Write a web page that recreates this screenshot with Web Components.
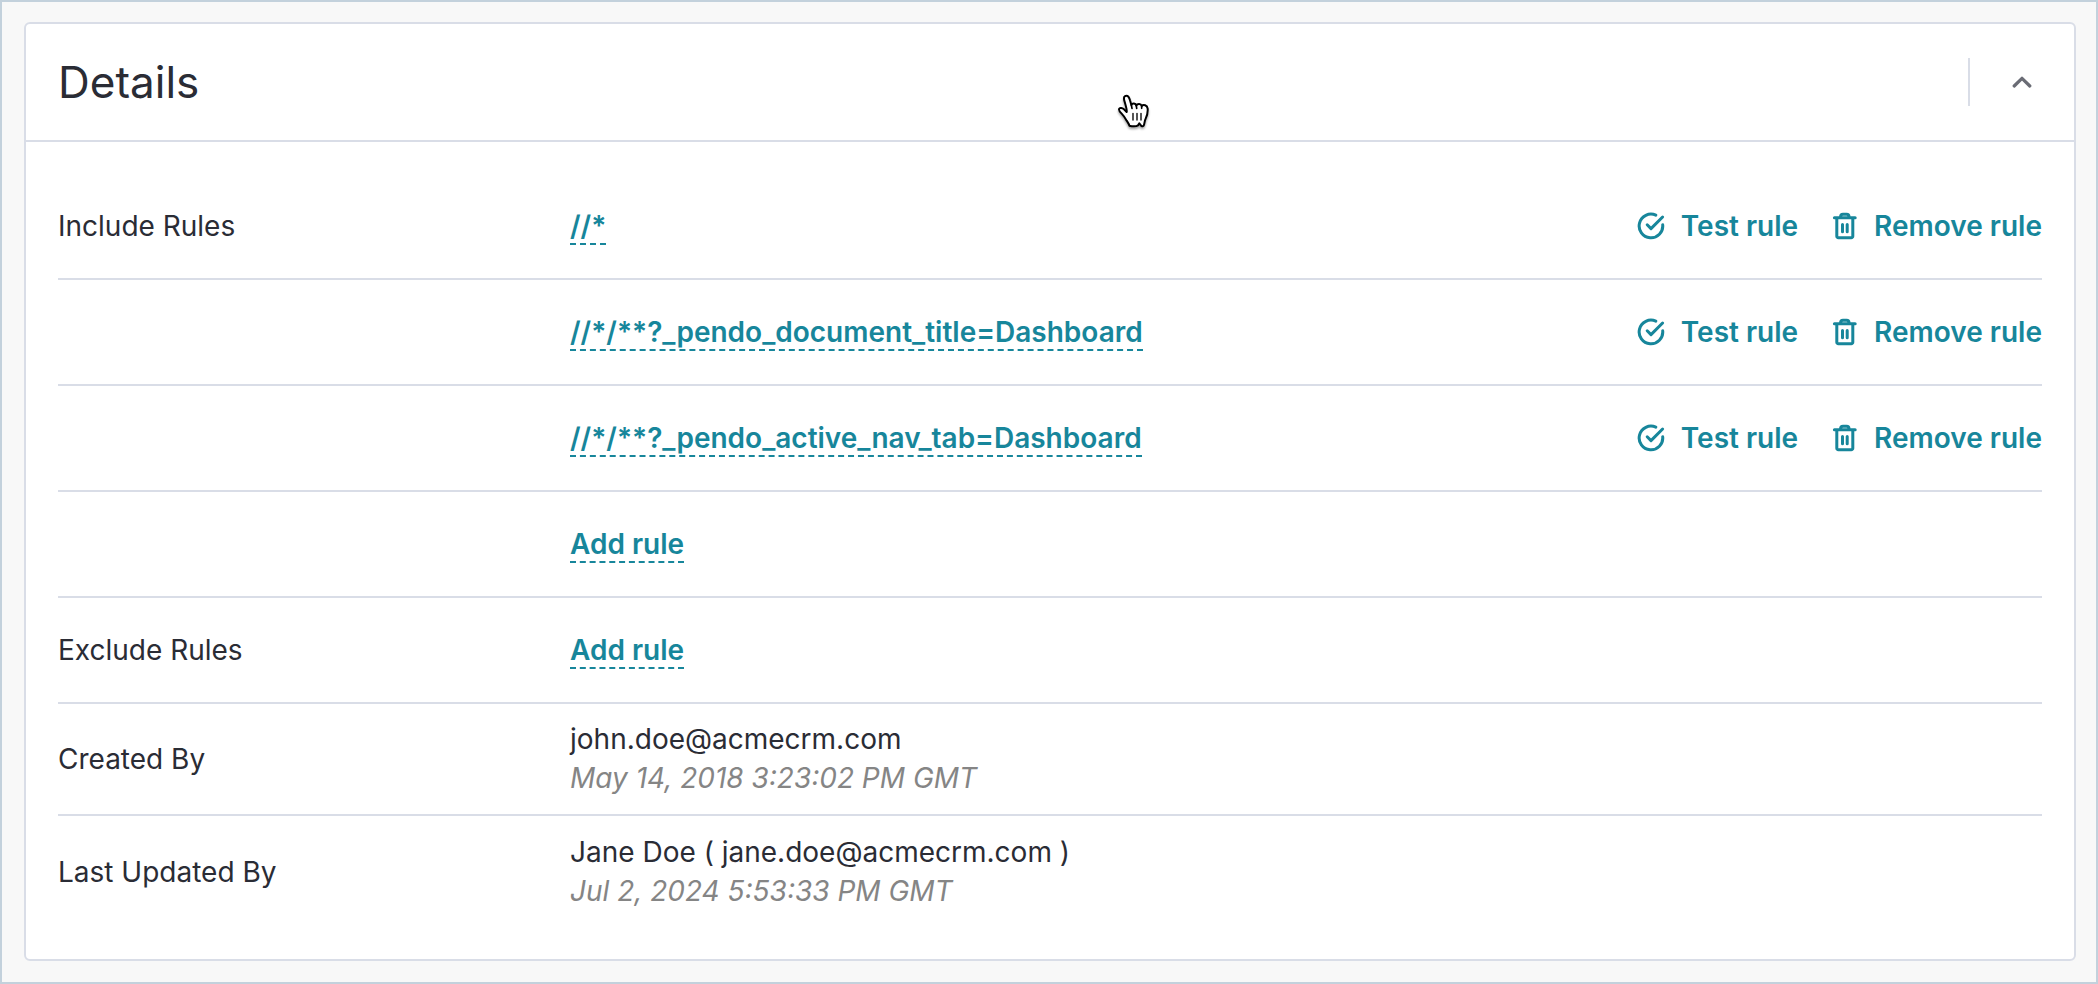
<!DOCTYPE html>
<html lang="en">
<head>
<meta charset="utf-8">
<title>Details</title>
<style>
  *, *::before, *::after { box-sizing: border-box; }
  html, body { margin: 0; }
  body {
    min-height: 100vh;
    display: flex;
    flex-direction: column;
    border: 2px solid #c3d1dc;
    background: #f8f8f8;
    padding: 20px 20px 21px 22px;
    color: #2a2c35;
    font: 400 28px/34px Inter, "Liberation Sans", sans-serif;
  }
  details-card { flex: 1; }
  pointer-cursor { position: absolute; left: 1100px; top: 81px; }
</style>
</head>
<body>
<details-card heading="Details">
  <detail-row label="Include Rules">
    <rule-link>//*</rule-link>
    <rule-actions slot="actions"></rule-actions>
  </detail-row>
  <detail-row>
    <rule-link>//*/**?_pendo_document_title=Dashboard</rule-link>
    <rule-actions slot="actions"></rule-actions>
  </detail-row>
  <detail-row>
    <rule-link>//*/**?_pendo_active_nav_tab=Dashboard</rule-link>
    <rule-actions slot="actions"></rule-actions>
  </detail-row>
  <detail-row><add-rule>Add rule</add-rule></detail-row>
  <detail-row label="Exclude Rules"><add-rule>Add rule</add-rule></detail-row>
  <detail-row label="Created By" tall>
    <author-stamp when="May 14, 2018 3:23:02 PM GMT">john.doe@acmecrm.com</author-stamp>
  </detail-row>
  <detail-row label="Last Updated By" tall last>
    <author-stamp when="Jul 2, 2024 5:53:33 PM GMT">Jane Doe ( jane.doe@acmecrm.com )</author-stamp>
  </detail-row>
</details-card>
<pointer-cursor></pointer-cursor>

<script>
const base = `*{box-sizing:border-box} button{font:inherit;color:inherit;background:none;border:0;padding:0;margin:0;cursor:pointer}`;

function define(name, render) {
  customElements.define(name, class extends HTMLElement {
    constructor() {
      super();
      this.attachShadow({ mode: 'open' });
    }
    connectedCallback() {
      this.shadowRoot.innerHTML = render(this);
    }
  });
}

define('details-card', el => `
  <style>${base}
    :host { display: flex; flex-direction: column; background: #fff; border: 2px solid #d9dde7; border-radius: 6px; }
    header { display: flex; align-items: center; height: 118px; padding: 0 32px; border-bottom: 2px solid #d9dde7; }
    h2 { flex: 1; margin: 0; font-size: 44px; line-height: 54px; font-weight: 400; }
    .toggle { display: flex; align-items: center; gap: 32px; }
    .divider { width: 2px; height: 48px; background: #d9dde7; }
    button { display: grid; place-items: center; width: 40px; height: 40px; color: #6a6c75; }
    .body { padding: 32px 32px 0; }
  </style>
  <header>
    <h2>${el.getAttribute('heading')}</h2>
    <div class="toggle">
      <span class="divider"></span>
      <button type="button" aria-label="Collapse" aria-expanded="true">
        <svg width="20" height="12" viewBox="0 0 20 12" fill="none" stroke="currentColor" stroke-width="3.2" stroke-linecap="round" stroke-linejoin="round"><path d="M2.2 10 10 2.3 17.8 10"/></svg>
      </button>
    </div>
  </header>
  <div class="body"><slot></slot></div>`);

define('detail-row', el => `
  <style>${base}
    :host { display: grid; grid-template-columns: 512px 1fr auto; align-items: center; min-height: 106px; border-bottom: 2px solid #d9dde7; }
    :host([tall]) { min-height: 112px; }
    :host([last]) { border-bottom: 0; }
  </style>
  <div>${el.getAttribute('label') || ''}</div>
  <div><slot></slot></div>
  <slot name="actions"></slot>`);

define('rule-link', () => `
  <style>${base}
    :host { display: block; }
    a { color: #17869b; font-weight: 600; text-decoration: none; border-bottom: 2px dashed; }
  </style>
  <a href="#"><slot></slot></a>`);

define('add-rule', () => `
  <style>${base}
    :host { display: flex; }
    button { color: #17869b; font-weight: 600; border-bottom: 2px dashed; margin-bottom: -2px; }
  </style>
  <button type="button"><slot></slot></button>`);

define('rule-actions', () => `
  <style>${base}
    :host { display: flex; gap: 32px; color: #17869b; font-weight: 600; }
    button { display: flex; align-items: center; gap: 16px; }
    svg { width: 28px; height: 28px; fill: none; stroke: currentColor; stroke-width: 3; stroke-linecap: round; stroke-linejoin: round; }
  </style>
  <button type="button">
    <svg viewBox="0 0 28 28"><path d="M18.8 3.2A11.8 11.8 0 1 0 25.7 12.8"/><path d="M10.2 12.8 14 16.6 25.6 5"/></svg>
    Test rule
  </button>
  <button type="button">
    <svg viewBox="0 0 28 28"><path d="M4.400 5.800H25.200M6.800 6V24.200A1.500 1.500 0 0 0 8.300 25.700H21.300A1.500 1.500 0 0 0 22.800 24.200V6M10.600 5.600V4.600A2.400 2.400 0 0 1 13 2.200H16.600A2.400 2.400 0 0 1 19 4.600V5.600M12.500 12.500V19.800M17.200 12.500V19.800"/></svg>
    Remove rule
  </button>`);

define('author-stamp', el => `
  <style>${base}
    :host { display: grid; gap: 5px; padding-bottom: 2px; }
    time { color: #858585; font-style: italic; }
  </style>
  <span><slot></slot></span>
  <time>${el.getAttribute('when')}</time>`);

define('pointer-cursor', () => `
  <style>
    :host { display: block; pointer-events: none; }
    svg { display: block; filter: drop-shadow(0 2px 1px rgba(0,0,0,.35)); }
  </style>
  <svg width="70" height="60" viewBox="0 0 210 180" fill="#fff" stroke="#000" stroke-width="6" stroke-linejoin="round" stroke-linecap="round" aria-hidden="true">
    <path d="M88 134C87 128 84 125 80 119C76 112 72 105 65 98C59 92 56 88 57 84C59 79 67 81 72 85L80 93C82 88 77 73 73 59C70 48 74 44 79 44C86 44 88 50 90 58L94 72C97 66 107 66 109 74C112 67 123 67 125 75C130 69 142 72 143 83C144 97 141 105 137 113C133 121 134 128 131 134C128 137 124 136 122 132L118 127L114 133C108 137 96 136 88 134Z"/>
    <path d="M94 72 96 82M109 74 110 82M125 75V82" stroke-width="5"/>
    <path d="M99 97V117M111 97V117M123 97V117" stroke-width="4"/>
  </svg>`);
</script>
</body>
</html>
